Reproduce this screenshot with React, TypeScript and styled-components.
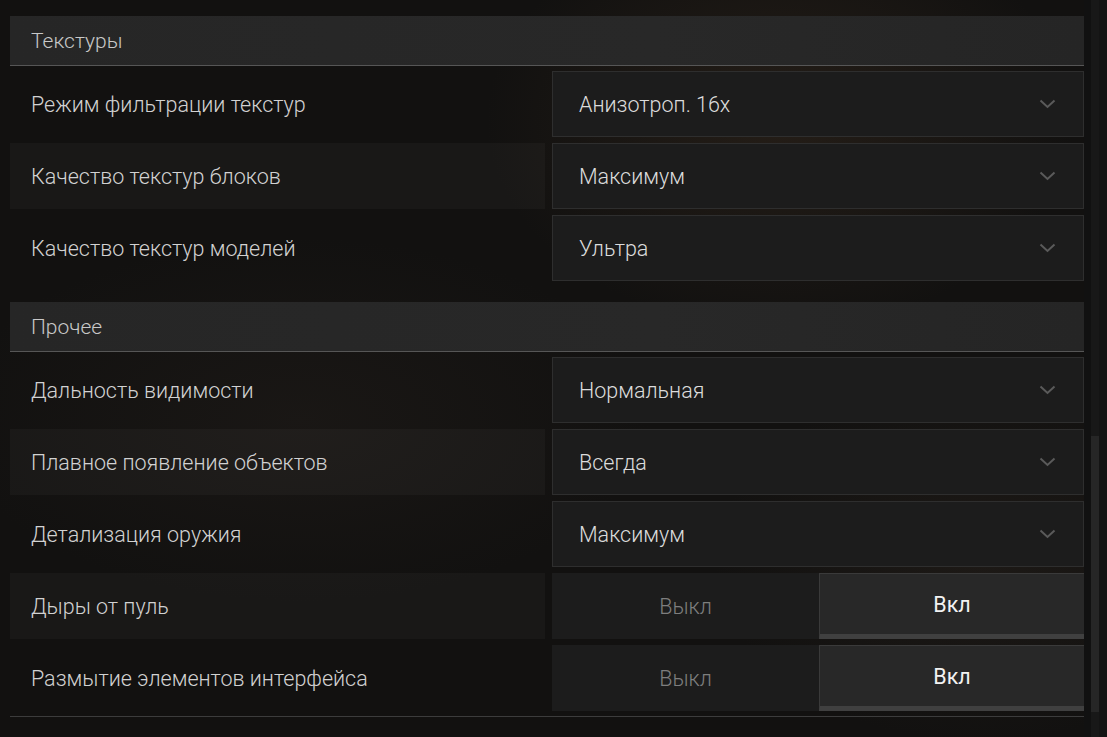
import React from "react";
import styled, { createGlobalStyle } from "styled-components";

const Global = createGlobalStyle`
  html, body { margin: 0; padding: 0; }
  body {
    width: 1107px;
    height: 737px;
    overflow: hidden;
    font-family: Roboto, "Noto Sans", "Liberation Sans", sans-serif;
    background:
      radial-gradient(ellipse 420px 300px at 780px 120px, rgba(70, 52, 36, 0.35), transparent 70%),
      radial-gradient(ellipse 500px 260px at 300px 420px, rgba(40, 34, 30, 0.35), transparent 70%),
      radial-gradient(ellipse 380px 260px at 980px 560px, rgba(54, 44, 36, 0.3), transparent 70%),
      #121110;
  }
`;

const Page = styled.div`
  display: flex;
  width: 1107px;
  height: 737px;
`;

const Content = styled.div`
  width: 1074px;
  margin-left: 10px;
  padding-top: 16px;
  display: flex;
  flex-direction: column;
  gap: 21px;
`;

const Section = styled.section`
  display: flex;
  flex-direction: column;
`;

const SectionHeader = styled.div`
  height: 50px;
  box-sizing: border-box;
  border-bottom: 1px solid #565656;
  background: linear-gradient(90deg, #262626, #282828 60%, #252525);
  display: flex;
  align-items: center;
  padding-left: 21px;
  color: #c8c8c8;
  font-size: 21px;
  font-weight: 300;
`;

const Rows = styled.div<{ $last: boolean }>`
  display: flex;
  flex-direction: column;
  gap: 6px;
  padding-top: 5px;
  padding-bottom: ${(p) => (p.$last ? "5px" : "0")};
  border-bottom: ${(p) => (p.$last ? "1px solid #3c3c3c" : "none")};
`;

const Row = styled.div`
  display: grid;
  grid-template-columns: 535px 532px;
  column-gap: 7px;
  height: 66px;
`;

const Label = styled.div<{ $striped: boolean }>`
  display: flex;
  align-items: center;
  padding-left: 21px;
  padding-top: 1px;
  color: #d2d2d2;
  font-size: 21.5px;
  font-weight: 300;
  background: ${(p) => (p.$striped ? "rgba(255,255,255,0.03)" : "transparent")};
`;

const Dropdown = styled.div`
  display: flex;
  align-items: center;
  justify-content: space-between;
  box-sizing: border-box;
  background: #1c1c1c;
  border: 1px solid #2e2e2e;
  padding: 0 27px 0 26px;
  color: #dcdcdc;
  font-size: 21.5px;
  font-weight: 300;
`;

const Chevron = () => (
  <svg width="17" height="10" viewBox="0 0 17 10" fill="none">
    <path d="M1.5 1.5 L8.5 8 L15.5 1.5" stroke="#5a5a5a" strokeWidth="2" />
  </svg>
);

const Toggle = styled.div`
  display: grid;
  grid-template-columns: 267px 265px;
`;

const ToggleOption = styled.div<{ $active: boolean }>`
  display: flex;
  align-items: center;
  justify-content: center;
  box-sizing: border-box;
  font-size: 21.5px;
  font-weight: ${(p) => (p.$active ? 400 : 300)};
  color: ${(p) => (p.$active ? "#f2f2f2" : "#7e7e7e")};
  background: ${(p) => (p.$active ? "#282828" : "#1c1c1c")};
  border-top: ${(p) => (p.$active ? "1px solid #3a3a3a" : "none")};
  border-left: ${(p) => (p.$active ? "1px solid #3a3a3a" : "none")};
  border-bottom: ${(p) => (p.$active ? "5px solid #404040" : "none")};
`;

const ScrollGutter = styled.div`
  width: 23px;
  display: flex;
  background: linear-gradient(90deg, #111 0px, #111 7px, #181818 7px, #181818 15px, #141414 15px);
`;

const ScrollTrack = styled.div`
  margin-left: 7px;
  width: 8px;
  display: flex;
  flex-direction: column;
`;

const ScrollThumb = styled.div`
  margin-top: 436px;
  height: 276px;
  background: #262626;
`;

type Item =
  | { label: string; kind: "select"; value: string }
  | { label: string; kind: "toggle"; on: boolean };

const sections: { title: string; items: Item[] }[] = [
  {
    title: "Текстуры",
    items: [
      { label: "Режим фильтрации текстур", kind: "select", value: "Анизотроп. 16x" },
      { label: "Качество текстур блоков", kind: "select", value: "Максимум" },
      { label: "Качество текстур моделей", kind: "select", value: "Ультра" },
    ],
  },
  {
    title: "Прочее",
    items: [
      { label: "Дальность видимости", kind: "select", value: "Нормальная" },
      { label: "Плавное появление объектов", kind: "select", value: "Всегда" },
      { label: "Детализация оружия", kind: "select", value: "Максимум" },
      { label: "Дыры от пуль", kind: "toggle", on: true },
      { label: "Размытие элементов интерфейса", kind: "toggle", on: true },
    ],
  },
];

export default function App() {
  return (
    <>
      <Global />
      <Page>
        <Content>
          {sections.map((s, si) => (
            <Section key={s.title}>
              <SectionHeader>{s.title}</SectionHeader>
              <Rows $last={si === sections.length - 1}>
                {s.items.map((it, i) => (
                  <Row key={it.label}>
                    <Label $striped={i % 2 === 1}>{it.label}</Label>
                    {it.kind === "select" ? (
                      <Dropdown>
                        <span>{it.value}</span>
                        <Chevron />
                      </Dropdown>
                    ) : (
                      <Toggle>
                        <ToggleOption $active={!it.on}>Выкл</ToggleOption>
                        <ToggleOption $active={it.on}>Вкл</ToggleOption>
                      </Toggle>
                    )}
                  </Row>
                ))}
              </Rows>
            </Section>
          ))}
        </Content>
        <ScrollGutter>
          <ScrollTrack>
            <ScrollThumb />
          </ScrollTrack>
        </ScrollGutter>
      </Page>
    </>
  );
}
